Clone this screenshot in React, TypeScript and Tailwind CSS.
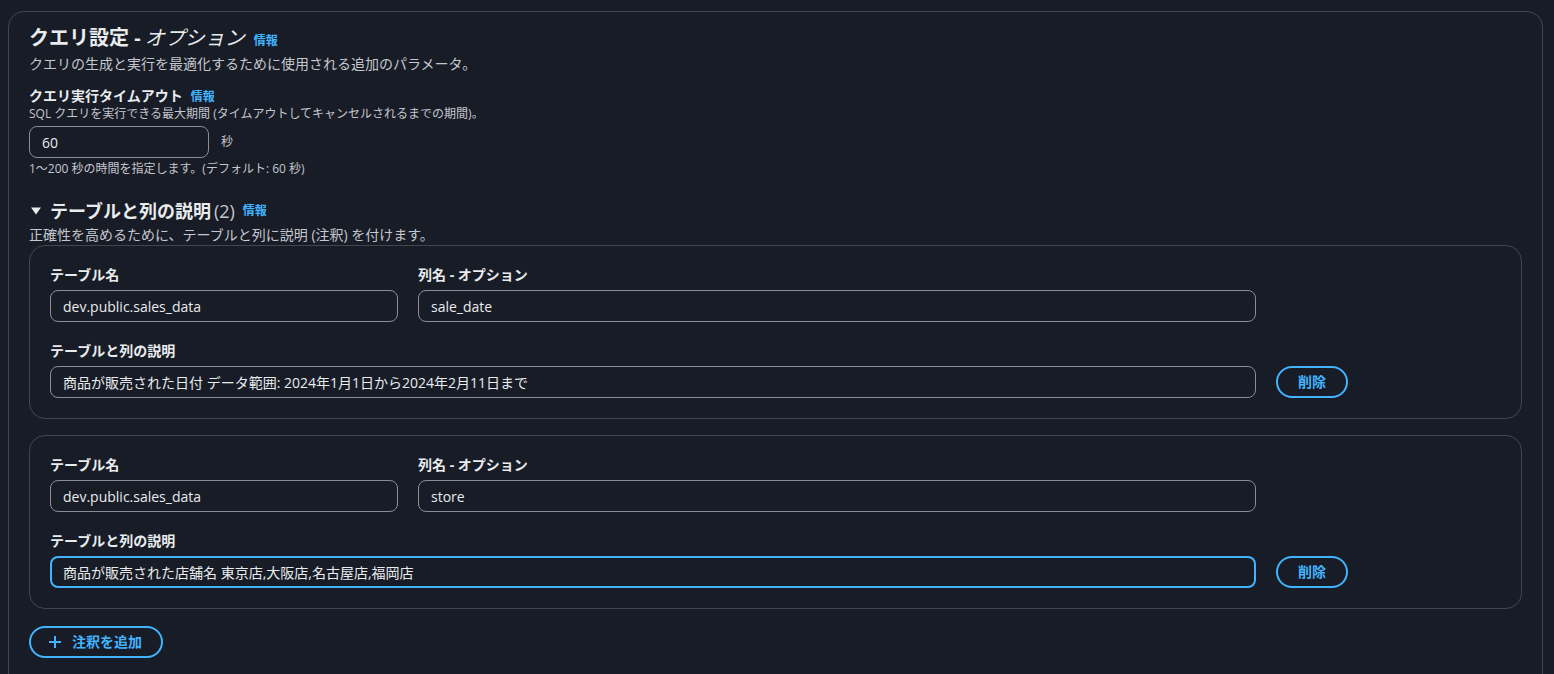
import React from 'react'

const FONT = { fontFamily: '"Open Sans", "Noto Sans CJK JP", sans-serif' }

function Info() {
  return <a className="ml-2 text-xs font-bold text-[#42b4ff] cursor-pointer">情報</a>
}

function Field({ label, value, width, focused }: { label: string; value: string; width: string; focused?: boolean }) {
  return (
    <div className={`flex flex-col ${width}`}>
      <label className="text-sm font-bold leading-[18px] text-[#e9ebed]">{label}</label>
      <input
        readOnly
        value={value}
        className={`mt-[6px] h-8 w-full rounded-lg bg-transparent text-sm text-[#e9ebed] outline-none ${
          focused ? 'border-2 border-[#42b4ff] pl-[11px]' : 'border border-[#8c8c94] pl-3'
        }`}
      />
    </div>
  )
}

function AnnotationCard({ column, description, focused }: { column: string; description: string; focused?: boolean }) {
  return (
    <div className="rounded-2xl border border-[#414750] px-5 pt-5 pb-5">
      <div className="flex gap-5">
        <Field label="テーブル名" value="dev.public.sales_data" width="w-[348px]" />
        <Field label="列名 - オプション" value={column} width="w-[838px]" />
      </div>
      <div className="mt-5 flex items-end gap-5">
        <Field label="テーブルと列の説明" value={description} width="w-[1206px]" focused={focused} />
        <button className="h-8 w-[72px] rounded-full border-2 border-[#42b4ff] text-sm font-bold text-[#42b4ff]">
          削除
        </button>
      </div>
    </div>
  )
}

export default function App() {
  return (
    <div className="min-h-screen bg-[#171c26] pt-[11px]" style={FONT}>
      <div className="ml-2 w-[1535px] rounded-2xl border border-[#414750] pl-5 pr-5 pt-[14px] pb-10">
        <h2 className="flex items-baseline text-xl font-bold leading-6 text-[#e9ebed]">
          クエリ設定 -<span className="ml-[4px] mr-[1px] font-normal italic">オプション</span>
          <Info />
        </h2>
        <p className="mt-1 text-sm leading-5 text-[#c6c6cd]">
          クエリの生成と実行を最適化するために使用される追加のパラメータ。
        </p>

        <div className="mt-[13px]">
          <div className="flex items-baseline text-sm font-bold leading-[18px] text-[#e9ebed]">
            クエリ実行タイムアウト
            <Info />
          </div>
          <p className="mt-[1px] text-xs leading-4 text-[#c6c6cd]">
            SQL クエリを実行できる最大期間 (タイムアウトしてキャンセルされるまでの期間)。
          </p>
          <div className="mt-[4px] flex items-center">
            <input
              readOnly
              value="60"
              className="h-8 w-[180px] rounded-lg border border-[#8c8c94] bg-transparent pl-3 text-sm text-[#e9ebed] outline-none"
            />
            <span className="ml-3 text-xs text-[#c6c6cd]">秒</span>
          </div>
          <p className="mt-[3px] text-xs leading-4 text-[#c6c6cd]">1〜200 秒の時間を指定します。(デフォルト: 60 秒)</p>
        </div>

        <div className="mt-[23px] flex items-center text-lg font-bold leading-[22px] text-[#e9ebed]">
          <svg width="12" height="10" viewBox="0 0 12 10" className="ml-[1px] mr-[8px]">
            <path d="M1 1.5h10L6 8.5z" fill="#e9ebed" />
          </svg>
          テーブルと列の説明
          <span className="ml-[3px] font-normal text-[#c6c6cd]">(2)</span>
          <Info />
        </div>
        <p className="mt-[4px] text-sm leading-[18px] text-[#c6c6cd]">
          正確性を高めるために、テーブルと列に説明 (注釈) を付けます。
        </p>

        <div className="mt-[1px] flex w-[1493px] flex-col gap-4">
          <AnnotationCard column="sale_date" description="商品が販売された日付 データ範囲: 2024年1月1日から2024年2月11日まで" />
          <AnnotationCard column="store" description="商品が販売された店舗名 東京店,大阪店,名古屋店,福岡店" focused />
        </div>

        <button className="mt-[17px] flex h-8 w-[134px] items-center rounded-full border-2 border-[#42b4ff] pl-[17px] text-sm font-bold text-[#42b4ff]">
          <svg width="14" height="14" viewBox="0 0 14 14" className="mr-[10px]">
            <path d="M7 1v12M1 7h12" stroke="#42b4ff" strokeWidth="2" />
          </svg>
          注釈を追加
        </button>
      </div>
    </div>
  )
}
